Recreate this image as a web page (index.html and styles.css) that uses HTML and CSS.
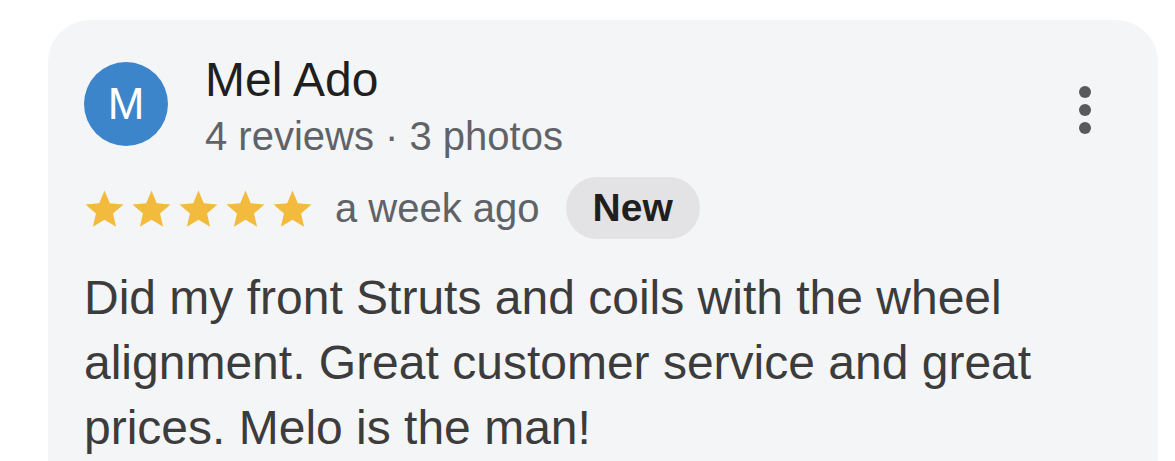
FILE: index.html
```html
<!DOCTYPE html>
<html lang="en">
<head>
    <meta charset="UTF-8">
    <meta name="viewport" content="width=device-width, initial-scale=1.0">
    <title>Review</title>
    <link rel="stylesheet" href="styles.css">
</head>
<body>
    <div class="review-card">
        <div class="review-header">
            <div class="avatar">M</div>
            <div class="reviewer">
                <div class="reviewer-name">Mel Ado</div>
                <div class="reviewer-meta">4 reviews · 3 photos</div>
            </div>
            <button class="more-btn" aria-label="More">
                <svg width="14" height="50" viewBox="0 0 14 50">
                    <circle cx="7" cy="7" r="6"></circle>
                    <circle cx="7" cy="25" r="6"></circle>
                    <circle cx="7" cy="43" r="6"></circle>
                </svg>
            </button>
        </div>

        <div class="review-rating">
            <div class="stars">
                <svg class="star" viewBox="0 0 24 24"><path d="M12 1.5l3.1 7.4 8 .7-6.1 5.3 1.8 7.8L12 18.6l-6.8 4.1 1.8-7.8L.9 9.6l8-.7z"/></svg>
                <svg class="star" viewBox="0 0 24 24"><path d="M12 1.5l3.1 7.4 8 .7-6.1 5.3 1.8 7.8L12 18.6l-6.8 4.1 1.8-7.8L.9 9.6l8-.7z"/></svg>
                <svg class="star" viewBox="0 0 24 24"><path d="M12 1.5l3.1 7.4 8 .7-6.1 5.3 1.8 7.8L12 18.6l-6.8 4.1 1.8-7.8L.9 9.6l8-.7z"/></svg>
                <svg class="star" viewBox="0 0 24 24"><path d="M12 1.5l3.1 7.4 8 .7-6.1 5.3 1.8 7.8L12 18.6l-6.8 4.1 1.8-7.8L.9 9.6l8-.7z"/></svg>
                <svg class="star" viewBox="0 0 24 24"><path d="M12 1.5l3.1 7.4 8 .7-6.1 5.3 1.8 7.8L12 18.6l-6.8 4.1 1.8-7.8L.9 9.6l8-.7z"/></svg>
            </div>
            <span class="review-date">a week ago</span>
            <span class="badge-new">New</span>
        </div>

        <p class="review-text">Did my front Struts and coils with the wheel alignment. Great customer service and great prices. Melo is the man!</p>
    </div>
</body>
</html>
```

FILE: styles.css
```css
body {
    font-family: "Liberation Sans", Arial, sans-serif;
    margin: 0;
    padding: 20px 17px 0 48px;
    background-color: #ffffff;
    overflow: hidden;
}
.review-card {
    background: #f4f5f7;
    border-radius: 42px 42px 0 0;
    padding: 42px 66px 40px 36px;
    height: 600px;
}
.review-header {
    display: flex;
    align-items: flex-start;
}
.avatar {
    width: 84px;
    height: 84px;
    border-radius: 50%;
    background: #3d85cb;
    color: white;
    font-size: 44px;
    display: flex;
    align-items: center;
    justify-content: center;
    flex-shrink: 0;
}
.reviewer {
    margin-left: 37px;
    flex: 1;
    margin-top: -11px;
}
.reviewer-name {
    font-size: 48px;
    line-height: 58px;
    color: #1f1f1f;
}
.reviewer-meta {
    font-size: 40px;
    line-height: 54px;
    color: #5f6368;
}
.more-btn {
    background: none;
    border: none;
    padding: 0;
    margin-top: 23px;
    fill: #5a5a5a;
    cursor: pointer;
}
.review-rating {
    display: flex;
    align-items: center;
    margin-top: 14px;
}
.stars {
    display: flex;
    gap: 6px;
}
.star {
    width: 41px;
    height: 41px;
    fill: #f3bb3e;
}
.review-date {
    font-size: 40px;
    color: #5f6368;
    margin-left: 22px;
}
.badge-new {
    font-size: 39px;
    font-weight: 600;
    color: #1f1f1f;
    background: #e3e3e5;
    border-radius: 32px;
    padding: 9px 27px 9px;
    margin-left: 26px;
}
.review-text {
    font-size: 48px;
    line-height: 65px;
    color: #3c3c3c;
    margin: 26px 0 0 0;
}
```
